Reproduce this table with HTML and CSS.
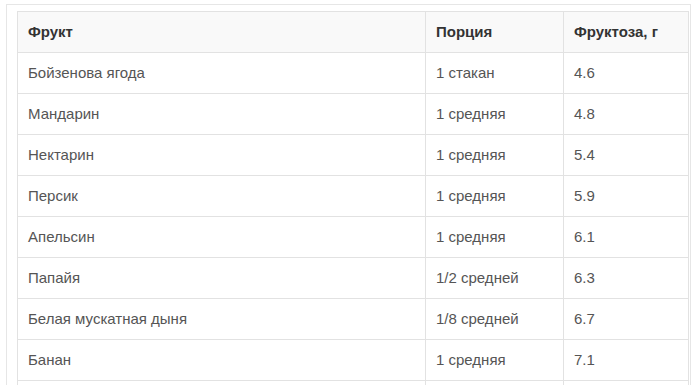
FILE: index.html
```html
<!DOCTYPE html>
<html lang="ru">
<head>
<meta charset="utf-8">
<link rel="stylesheet" href="styles.css">
</head>
<body>
<div class="frame">
  <table class="fruit-table">
    <colgroup>
      <col class="c1">
      <col class="c2">
      <col class="c3">
    </colgroup>
    <thead>
      <tr><th>Фрукт</th><th>Порция</th><th>Фруктоза, г</th></tr>
    </thead>
    <tbody>
      <tr><td>Бойзенова ягода</td><td>1 стакан</td><td>4.6</td></tr>
      <tr><td>Мандарин</td><td>1 средняя</td><td>4.8</td></tr>
      <tr><td>Нектарин</td><td>1 средняя</td><td>5.4</td></tr>
      <tr><td>Персик</td><td>1 средняя</td><td>5.9</td></tr>
      <tr><td>Апельсин</td><td>1 средняя</td><td>6.1</td></tr>
      <tr><td>Папайя</td><td>1/2 средней</td><td>6.3</td></tr>
      <tr><td>Белая мускатная дыня</td><td>1/8 средней</td><td>6.7</td></tr>
      <tr><td>Банан</td><td>1 средняя</td><td>7.1</td></tr>
      <tr><td>&nbsp;</td><td>&nbsp;</td><td>&nbsp;</td></tr>
    </tbody>
  </table>
</div>
</body>
</html>
```

FILE: styles.css
```css
html, body {
  margin: 0;
  padding: 0;
  background: #ffffff;
}
body {
  font-family: "Liberation Sans", Arial, sans-serif;
  font-size: 15px;
  color: #555555;
}
.frame {
  margin: 4px 5px 0 6px;
  border-top: 1px solid #e6e6e6;
  border-left: 1px solid #e6e6e6;
  border-right: 1px solid #e6e6e6;
  padding: 6px 2px 0 10px;
}
.fruit-table {
  border-collapse: collapse;
  table-layout: fixed;
  width: 671px;
}
.c1 { width: 408px; }
.c2 { width: 138px; }
.c3 { width: 125px; }
.fruit-table th,
.fruit-table td {
  border: 1px solid #e2e2e2;
  padding: 10px;
  line-height: 20px;
  text-align: left;
  vertical-align: middle;
}
.fruit-table th {
  background: #f9f9f9;
  color: #333333;
  font-weight: bold;
}
```
